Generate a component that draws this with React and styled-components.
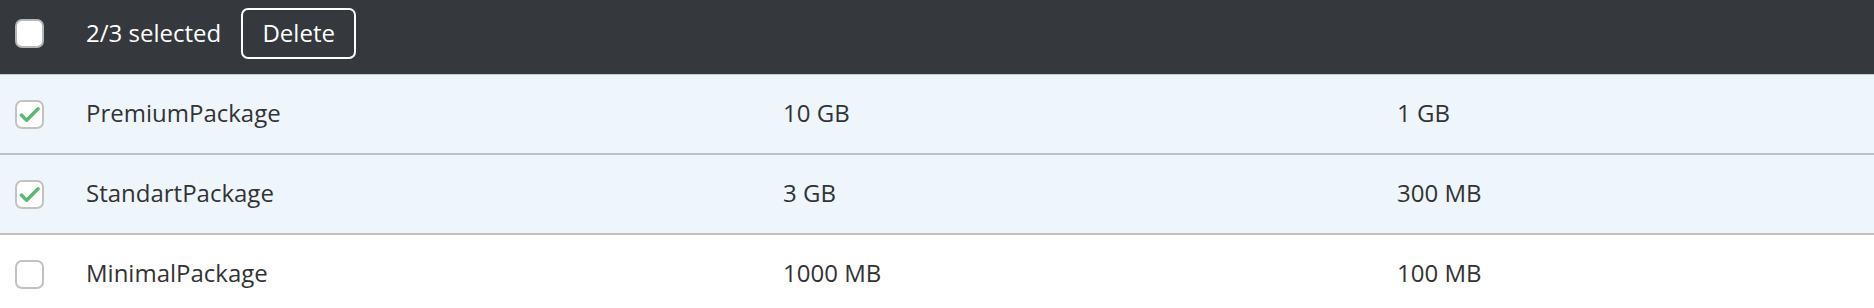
import React from 'react'
import styled, { createGlobalStyle } from 'styled-components'

const GlobalStyle = createGlobalStyle`
  body {
    margin: 0;
    font-family: "Open Sans", "Liberation Sans", sans-serif;
    background: #fff;
  }
`

const packages = [
  { name: 'PremiumPackage', disk: '10 GB', traffic: '1 GB', selected: true },
  { name: 'StandartPackage', disk: '3 GB', traffic: '300 MB', selected: true },
  { name: 'MinimalPackage', disk: '1000 MB', traffic: '100 MB', selected: false },
]

const Check = ({ checked, dark }) => (
  <CheckBox dark={dark}>
    {checked && (
      <svg width="23" height="23" viewBox="0 0 24 24" fill="none">
        <path d="M3.5 12.5l5.5 5.5L21 6" stroke="#5cb874" strokeWidth="3.6" strokeLinecap="round" strokeLinejoin="round" />
      </svg>
    )}
  </CheckBox>
)

const App = () => {
  const count = packages.filter(p => p.selected).length
  return (
    <>
      <GlobalStyle />
      <Table>
        <Toolbar>
          <CheckCell>
            <Check dark />
          </CheckCell>
          <SelectedText>{count}/{packages.length} selected</SelectedText>
          <DeleteButton>Delete</DeleteButton>
        </Toolbar>
        {packages.map(p => (
          <Row key={p.name} selected={p.selected}>
            <CheckCell>
              <Check checked={p.selected} />
            </CheckCell>
            <Cell>{p.name}</Cell>
            <Cell>{p.disk}</Cell>
            <Cell>{p.traffic}</Cell>
          </Row>
        ))}
      </Table>
    </>
  )
}

export default App

const Table = styled.div`
  width: 100%;
`

const Toolbar = styled.div`
  height: 75px;
  box-sizing: border-box;
  padding-bottom: 7px;
  background-color: #35383c;
  border-bottom: 1px solid #c9cbcd;
  display: flex;
  align-items: center;
  color: #fff;
`

const CheckCell = styled.div`
  width: 70px;
  flex-shrink: 0;
  display: flex;
  align-items: center;
  padding-left: 15px;
  box-sizing: border-box;
`

const CheckBox = styled.div`
  width: 29px;
  height: 29px;
  box-sizing: border-box;
  border-radius: 7px;
  border: 2px solid ${p => (p.dark ? '#b5b7b9' : '#c2c2c2')};
  background: #fff;
  display: flex;
  align-items: center;
  justify-content: center;
`

const SelectedText = styled.div`
  font-size: 24px;
  padding-left: 16px;
  margin-right: 20px;
  margin-bottom: 2px;
`

const DeleteButton = styled.button`
  height: 51px;
  width: 115px;
  box-sizing: border-box;
  border: 2px solid #fff;
  border-radius: 7px;
  background: transparent;
  color: #fff;
  font-family: inherit;
  font-size: 24px;
  padding: 0 0 2px;
  cursor: pointer;
`

const Row = styled.div`
  display: grid;
  grid-template-columns: 70px 697px 614px 1fr;
  align-items: center;
  height: 78px;
  background-color: ${p => (p.selected ? '#eef6fc' : '#fff')};
  border-bottom: 2px solid ${p => (p.selected ? '#c0c0c0' : 'transparent')};
  color: #333;
`

const Cell = styled.div`
  font-size: 24px;
  padding-left: 16px;
  margin-bottom: 3px;
`
